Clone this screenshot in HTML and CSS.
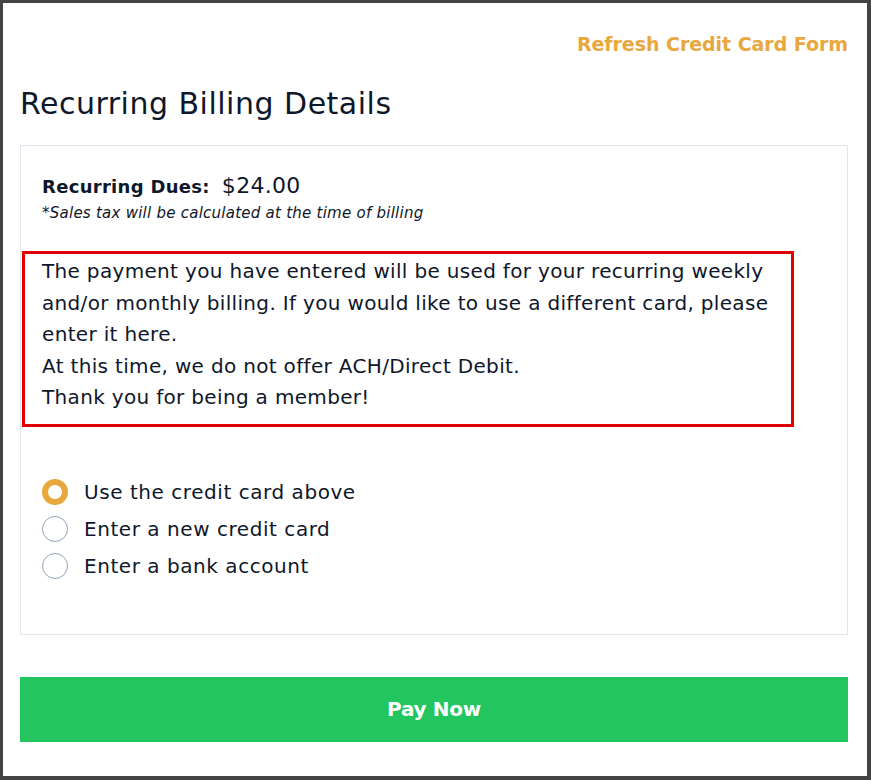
FILE: index.html
```html
<!DOCTYPE html>
<html lang="en">
<head>
<meta charset="utf-8">
<title>Recurring Billing Details</title>
<link rel="stylesheet" href="styles.css">
</head>
<body>
<div class="frame">
  <div class="top-link"><a href="#" class="refresh">Refresh Credit Card Form</a></div>
  <h1 class="title">Recurring Billing Details</h1>
  <div class="card">
    <div class="dues">
      <span class="dues-label">Recurring Dues:</span>
      <span class="dues-amount">$24.00</span>
    </div>
    <div class="tax-note">*Sales tax will be calculated at the time of billing</div>
    <div class="notice">
      <p>The payment you have entered will be used for your recurring weekly and/or monthly billing. If you would like to use a different card, please enter it here.</p>
      <p>At this time, we do not offer ACH/Direct Debit.</p>
      <p>Thank you for being a member!</p>
    </div>
    <div class="options">
      <label class="option"><span class="radio checked"></span><span class="option-text">Use the credit card above</span></label>
      <label class="option"><span class="radio"></span><span class="option-text">Enter a new credit card</span></label>
      <label class="option"><span class="radio"></span><span class="option-text">Enter a bank account</span></label>
    </div>
  </div>
  <button class="pay">Pay Now</button>
</div>
</body>
</html>
```

FILE: styles.css
```css
* { box-sizing: border-box; }
html, body { margin: 0; padding: 0; }
body {
  font-family: "DejaVu Sans", "Open Sans", sans-serif;
  color: #0f172a;
  background: #444444;
}
.frame {
  width: 871px;
  height: 780px;
  border-style: solid;
  border-color: #444444;
  border-width: 3px 4px 4px 3px;
  background: #ffffff;
  padding: 27px 19px 0 17px;
  display: flex;
  flex-direction: column;
}
.top-link {
  display: flex;
  justify-content: flex-end;
  height: 28px;
  line-height: 28px;
}
.refresh {
  color: #e8a83e;
  font-weight: 700;
  font-size: 19px;
  letter-spacing: -0.05px;
  text-decoration: none;
}
.title {
  margin: 26px 0 0 0;
  font-size: 30px;
  line-height: 40px;
  font-weight: 400;
  letter-spacing: 0.5px;
  color: #0f172a;
}
.card {
  margin-top: 21px;
  border: 1px solid #e2e8f0;
  padding: 25px 0 49px 0;
  display: flex;
  flex-direction: column;
}
.dues {
  padding-left: 21px;
  height: 30px;
  line-height: 30px;
  display: flex;
  align-items: baseline;
  gap: 12px;
}
.dues-label { font-weight: 700; font-size: 18px; letter-spacing: 0.3px; }
.dues-amount { font-size: 22px; letter-spacing: 0.3px; }
.tax-note {
  padding-left: 21px;
  margin-top: 2px;
  font-size: 15px;
  line-height: 20px;
  font-style: italic;
  letter-spacing: 0.25px;
}
.notice {
  margin: 28px 0 0 1px;
  width: 772px;
  border: 3px solid #e00000;
  padding: 2px 10px 10px 17px;
  font-size: 20px;
  line-height: 31.5px;
  letter-spacing: 0.33px;
}
.notice p { margin: 0; }
.options {
  margin-top: 47px;
  padding-left: 21px;
  display: flex;
  flex-direction: column;
}
.option {
  height: 37px;
  display: flex;
  align-items: center;
  gap: 16px;
  font-size: 20px;
  letter-spacing: 0.55px;
}
.radio {
  width: 26px;
  height: 26px;
  border-radius: 50%;
  border: 1px solid #94a3b8;
  background: #fff;
  flex: none;
}
.radio.checked {
  border: 6px solid #e8a83e;
}
.pay {
  margin-top: 42px;
  height: 65px;
  width: 100%;
  border: none;
  background: #22c55e;
  color: #ffffff;
  font-family: inherit;
  font-weight: 700;
  font-size: 20px;
  letter-spacing: -0.3px;
}
```
